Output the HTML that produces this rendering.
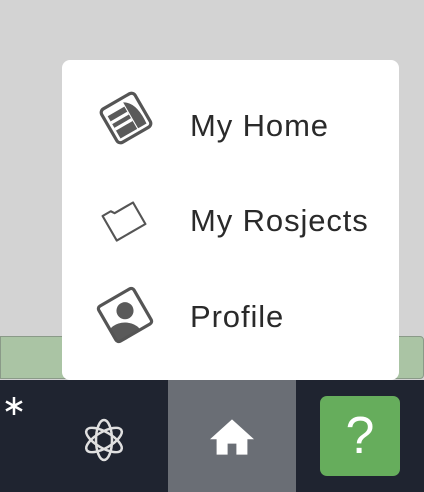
<!DOCTYPE html>
<html><head><style>
body{margin:0;width:424px;height:492px;overflow:hidden;background:#d3d3d3;font-family:"Liberation Sans",sans-serif;position:relative}
.green{position:absolute;left:0;top:336px;width:422px;height:41px;background:#aac4a4;border:1px solid #8a9a88;border-radius:0 4px 4px 0}
.bar{position:absolute;left:0;top:380px;width:424px;height:112px;background:#1f2430}
.homeb{position:absolute;left:168px;top:380px;width:128px;height:112px;background:#6a6e75}
.help{position:absolute;left:320px;top:396px;width:80px;height:80px;background:#66ad5c;border-radius:7px;color:#fff;font-size:52px;text-align:center;line-height:80px}
.pop{position:absolute;left:62px;top:60px;width:337px;height:320px;background:#fff;border-radius:8px}
.t{position:absolute;left:128px;font-size:31px;color:#2a2a2a;letter-spacing:0.9px}
svg{position:absolute}
</style></head><body>
<div class="green"></div>
<div class="bar"></div>
<div class="homeb"></div>
<svg style="left:4px;top:396px" width="20" height="20" viewBox="0 0 20 20" stroke="#fff" stroke-width="2.5"><path d="M10 1V19M2 5.5L18 14.5M2 14.5L18 5.5"/></svg>
<svg style="left:78px;top:414px" width="52" height="52" viewBox="0 0 52 52" fill="none" stroke="#e0e0e0" stroke-width="2.5">
<g transform="translate(26 26)">
<ellipse rx="8" ry="20" transform="rotate(0)"/><ellipse rx="8" ry="20" transform="rotate(60)"/><ellipse rx="8" ry="20" transform="rotate(120)"/>
</g></svg>
<svg style="left:210px;top:417px" width="44" height="40" viewBox="0 0 40 36"><path d="M20 2 L40 20 L34 20 L34 34 L24 34 L24 24 L16 24 L16 34 L6 34 L6 20 L0 20 Z" fill="#fff"/></svg>
<div class="help">?</div>
<div class="pop">
<svg style="left:34px;top:28px" width="60" height="60" viewBox="0 0 56 56">
<g transform="rotate(-30 28 28)"><rect x="10" y="10" width="36" height="36" rx="4" fill="none" stroke="#555" stroke-width="3"/>
<path d="M14 18 H32 V42 H14Z M33 14 Q44 20 42 42 H33Z" fill="#5a5a5a"/><path d="M14 25H32M14 32H32" stroke="#fff" stroke-width="3"/></g></svg>
<svg style="left:36px;top:134px" width="52" height="52" viewBox="0 0 44 44"><g transform="rotate(-30 22 22)"><path d="M8 10 H16 L18 13 H36 V34 H8Z" fill="none" stroke="#555" stroke-width="1.8" stroke-linejoin="round"/></g></svg>
<svg style="left:32px;top:224px" width="62" height="62" viewBox="0 0 58 58"><defs><clipPath id="c"><rect x="10" y="10" width="38" height="38" rx="3"/></clipPath></defs><g transform="rotate(-30 29 29)"><g clip-path="url(#c)"><g transform="rotate(30 29 29)"><circle cx="29" cy="25" r="8" fill="#5a5a5a"/><ellipse cx="29" cy="48" rx="16" ry="12" fill="#5a5a5a"/></g></g><rect x="10" y="10" width="38" height="38" rx="3" fill="none" stroke="#555" stroke-width="3"/></g></svg>
<div class="t" style="top:48px">My Home</div>
<div class="t" style="top:143px">My Rosjects</div>
<div class="t" style="top:239px">Profile</div>
</div>
</body></html>
